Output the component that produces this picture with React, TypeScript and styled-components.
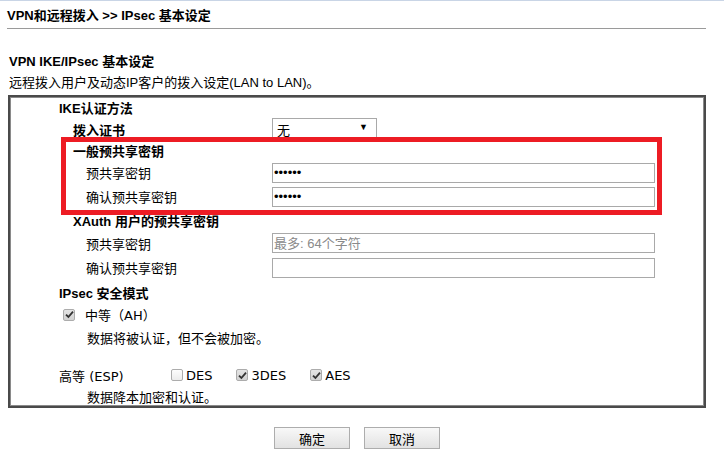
import React from "react";
import styled, { createGlobalStyle } from "styled-components";

const GlobalStyle = createGlobalStyle`
  html, body {
    margin: 0;
    padding: 0;
    background: #fff;
  }
  body {
    font-family: "Liberation Sans", "Noto Sans CJK SC", sans-serif;
    font-size: 13px;
    color: #000;
  }
`;

const Page = styled.div`
  width: 724px;
  height: 458px;
  border-top: 1px solid #c9d5e6;
  box-sizing: border-box;
  overflow: hidden;
`;

const Header = styled.div`
  height: 27px;
  padding-left: 7px;
  display: flex;
  align-items: center;
  font-weight: bold;
`;

const Rule = styled.div`
  margin-left: 7px;
  width: 699px;
  height: 1px;
  background: #9a9a9a;
`;

const SectionTitle = styled.div`
  margin-top: 23px;
  padding-left: 9px;
  line-height: 20px;
  font-weight: bold;
`;

const Desc = styled.div`
  padding-left: 9px;
  line-height: 22px;
`;

const Box = styled.div`
  position: relative;
  margin-top: 1px;
  margin-left: 8px;
  width: 698px;
  box-sizing: border-box;
  border: 2px solid #4a4a4a;
  box-shadow: inset 0 0 0 1px #8a8a8a;
`;

const Highlight = styled.div`
  position: absolute;
  left: 51px;
  top: 40px;
  width: 601px;
  height: 78px;
  box-sizing: border-box;
  border: 5px solid #ed1c24;
  pointer-events: none;
`;

const Row = styled.div<{ $h: number }>`
  display: flex;
  align-items: center;
  height: ${(p) => p.$h}px;
`;

const Label = styled.div<{ $indent: number; $bold?: boolean }>`
  width: 262px;
  box-sizing: border-box;
  padding-left: ${(p) => p.$indent}px;
  font-weight: ${(p) => (p.$bold ? "bold" : "normal")};
  white-space: nowrap;
  flex-shrink: 0;
`;

const Select = styled.div`
  width: 105px;
  height: 20px;
  box-sizing: border-box;
  border: 1px solid #a9a9a9;
  display: flex;
  align-items: center;
  justify-content: space-between;
  padding: 2px 8px 0 4px;
  align-self: flex-start;
  background: #fff;
`;

const Arrow = styled.span`
  font-size: 9px;
  line-height: 1;
  margin-bottom: 4px;
`;

const TextInput = styled.input`
  width: 383px;
  height: 20px;
  box-sizing: border-box;
  border: 1px solid #a9a9a9;
  padding: 0 1px;
  margin: 0;
  font-family: "Liberation Sans", "Noto Sans CJK SC", sans-serif;
  font-size: 13px;
  color: #000;
  outline: none;
  &::placeholder {
    color: #8a8a8a;
  }
`;

const Check = styled.span<{ $on?: boolean }>`
  display: inline-flex;
  align-items: center;
  justify-content: center;
  width: 12px;
  height: 12px;
  box-sizing: border-box;
  border: 1px solid #acacac;
  border-radius: 2px;
  background: ${(p) =>
    p.$on ? "linear-gradient(#e4e4e4, #d2d2d2)" : "linear-gradient(#fdfdfd, #ececec)"};
  flex-shrink: 0;
`;

const CheckMark = () => (
  <svg width="9" height="9" viewBox="0 0 9 9">
    <path d="M1 4.6 L3.4 7 L8 1.6" fill="none" stroke="#333" strokeWidth="1.8" />
  </svg>
);

const OptionText = styled.span`
  font-family: "DejaVu Sans", "Noto Sans CJK SC", sans-serif;
  font-size: 13px;
`;

const Option = styled.label<{ $gap: number }>`
  display: inline-flex;
  align-items: center;
  gap: ${(p) => p.$gap}px;
  margin-right: 24px;
`;

const ModeRow = styled(Row)<{ $indent: number }>`
  padding-left: ${(p) => p.$indent}px;
`;

const ModeLabel = styled(OptionText)`
  width: 112px;
`;

const Note = styled.div`
  padding-left: 77px;
`;

const Buttons = styled.div`
  margin-top: 19px;
  margin-left: 8px;
  width: 698px;
  display: flex;
  justify-content: center;
  gap: 14px;
`;

const Button = styled.button`
  width: 76px;
  height: 22px;
  border: 1px solid #adadad;
  border-radius: 0;
  background: linear-gradient(#f8f8f8, #e2e2e2);
  font-family: "Liberation Sans", "Noto Sans CJK SC", sans-serif;
  font-size: 13px;
  color: #000;
  padding: 0;
`;

export default function App() {
  return (
    <Page>
      <GlobalStyle />
      <Header>VPN和远程拨入 &gt;&gt; IPsec 基本设定</Header>
      <Rule />
      <SectionTitle>VPN IKE/IPsec 基本设定</SectionTitle>
      <Desc>远程拨入用户及动态IP客户的拨入设定(LAN to LAN)。</Desc>
      <Box>
        <Row $h={21}>
          <Label $indent={49} $bold>IKE认证方法</Label>
        </Row>
        <Row $h={22}>
          <Label $indent={63} $bold>拨入证书</Label>
          <Select>
            <span>无</span>
            <Arrow>▼</Arrow>
          </Select>
        </Row>
        <Row $h={21}>
          <Label $indent={63} $bold>一般预共享密钥</Label>
        </Row>
        <Row $h={23}>
          <Label $indent={76}>预共享密钥</Label>
          <TextInput type="password" defaultValue="123456" readOnly />
        </Row>
        <Row $h={25}>
          <Label $indent={76}>确认预共享密钥</Label>
          <TextInput type="password" defaultValue="123456" readOnly />
        </Row>
        <Row $h={22}>
          <Label $indent={63} $bold>XAuth 用户的预共享密钥</Label>
        </Row>
        <Row $h={24}>
          <Label $indent={76}>预共享密钥</Label>
          <TextInput type="text" placeholder="最多: 64个字符" />
        </Row>
        <Row $h={25}>
          <Label $indent={76}>确认预共享密钥</Label>
          <TextInput type="text" />
        </Row>
        <Row $h={24}>
          <Label $indent={49} $bold>IPsec 安全模式</Label>
        </Row>
        <ModeRow $h={21} $indent={53}>
          <Option $gap={10}>
            <Check $on>
              <CheckMark />
            </Check>
            <OptionText>中等（AH）</OptionText>
          </Option>
        </ModeRow>
        <Row $h={24}>
          <Note>数据将被认证，但不会被加密。</Note>
        </Row>
        <Row $h={15} />
        <ModeRow $h={22} $indent={49}>
          <ModeLabel>高等 (ESP)</ModeLabel>
          <Option $gap={3}>
            <Check />
            <OptionText>DES</OptionText>
          </Option>
          <Option $gap={3}>
            <Check $on>
              <CheckMark />
            </Check>
            <OptionText>3DES</OptionText>
          </Option>
          <Option $gap={3}>
            <Check $on>
              <CheckMark />
            </Check>
            <OptionText>AES</OptionText>
          </Option>
        </ModeRow>
        <Row $h={20}>
          <Note>数据降本加密和认证。</Note>
        </Row>
        <Highlight />
      </Box>
      <Buttons>
        <Button>确定</Button>
        <Button>取消</Button>
      </Buttons>
    </Page>
  );
}
